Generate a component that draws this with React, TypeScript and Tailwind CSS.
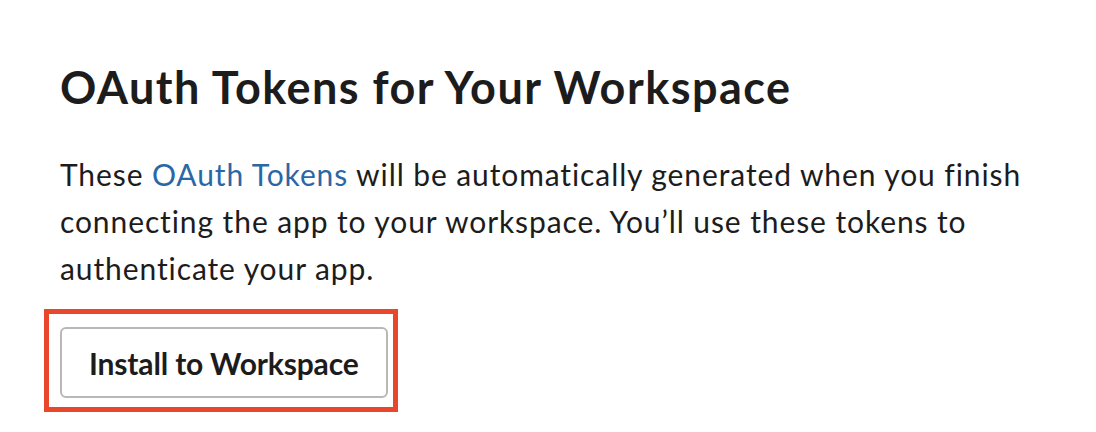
import React from "react";

export default function App() {
  return (
    <div className="w-[1096px] h-[432px] bg-white overflow-hidden" style={{ fontFamily: "Lato, 'Noto Sans', sans-serif" }}>
      <div className="pl-[60px] pt-[60px] w-[1060px]">
        <h1 className="text-[45px] leading-[54px] font-bold text-[#1d1c1d] tracking-[1.45px]">
          OAuth Tokens for Your Workspace
        </h1>
        <p className="mt-[37px] text-[30px] leading-[47px] text-[#1d1c1d] tracking-[0.9px]">
          These <a className="text-[#2a67a6]">OAuth Tokens</a> will be automatically generated when you finish connecting the app to your workspace. You’ll use these tokens to authenticate your app.
        </p>
        <div className="relative mt-[35px] inline-block">
          <button className="h-[71px] px-[27px] rounded-[6px] border-2 border-[#b8b8b8] bg-white text-[30px] leading-[36px] font-bold text-[#1d1c1d] tracking-[-0.15px]">
            Install to Workspace
          </button>
          <div className="absolute left-[-16px] top-[-18px] right-[-10px] bottom-[-14px] border-[5px] border-[#e8472b] pointer-events-none" />
        </div>
      </div>
    </div>
  );
}
